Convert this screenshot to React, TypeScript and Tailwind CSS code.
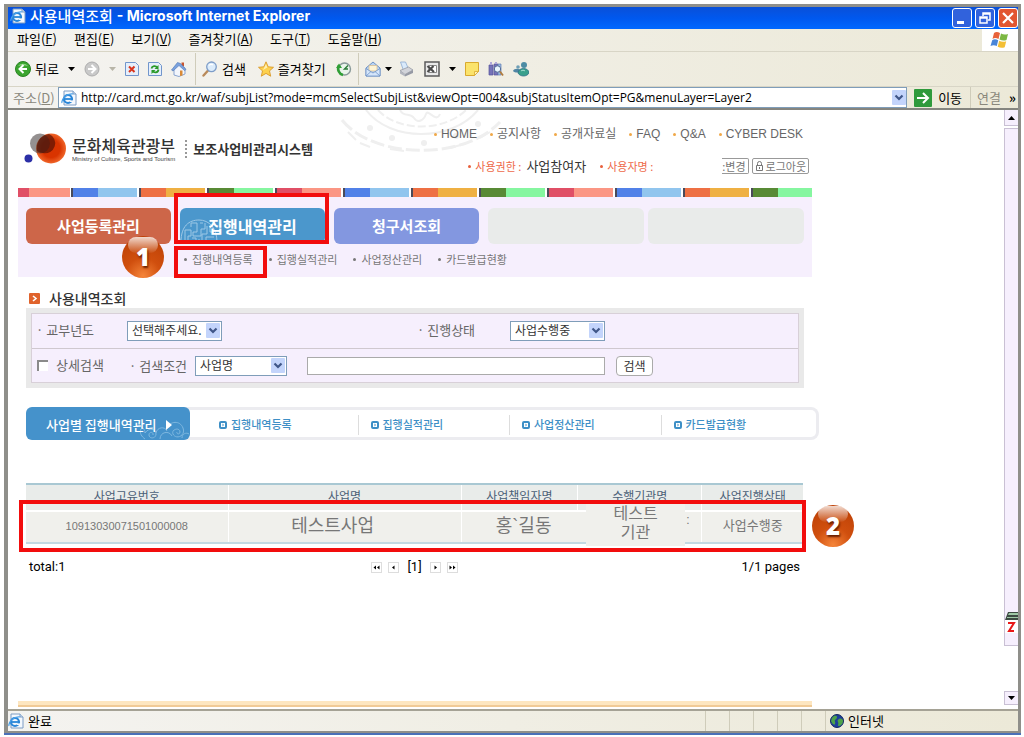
import type { ReactNode } from 'react';

const menus = [
  { label: '파일', hotkey: 'F' },
  { label: '편집', hotkey: 'E' },
  { label: '보기', hotkey: 'V' },
  { label: '즐겨찾기', hotkey: 'A' },
  { label: '도구', hotkey: 'T' },
  { label: '도움말', hotkey: 'H' },
];

const topLinks = ['HOME', '공지사항', '공개자료실', 'FAQ', 'Q&A', 'CYBER DESK'];

const stripColors = [
  ['bg-[#5181e8]', 'bg-[#91c5ee]'],
  ['bg-[#ee7044]', 'bg-[#efb043]'],
  ['bg-[#588a35]', 'bg-[#86f6a0]'],
  ['bg-[#e04f66]', 'bg-[#fb9684]'],
];

const subMenus = ['집행내역등록', '집행실적관리', '사업정산관리', '카드발급현황'];

const columns = [
  { label: '사업고유번호', width: 'w-[26%]' },
  { label: '사업명', width: 'w-[30%]' },
  { label: '사업책임자명', width: 'w-[15%]' },
  { label: '수행기관명', width: 'w-[16%]' },
  { label: '사업진행상태', width: 'w-[13%]' },
];

function IeIcon() {
  return (
    <svg viewBox="0 0 16 16" className="h-4 w-4 shrink-0" aria-hidden="true">
      <path d="M3 1h9l3 3v11H3z" fill="#f4f8fd" stroke="#7d9cc4" />
      <path d="M12 1v3h3" fill="#cfdff2" stroke="#7d9cc4" />
      <circle cx="7" cy="9" r="4" fill="none" stroke="#2a86d8" strokeWidth="2.2" />
      <path d="M4 9h7" stroke="#2a86d8" strokeWidth="1.8" />
      <path d="M9 10.4h4v1.6H9z" fill="#f4f8fd" />
      <path d="M1 13C0 9 6 3 12 4" fill="none" stroke="#4aa0e8" strokeWidth="1.2" />
    </svg>
  );
}

function Caret({ className = 'text-black' }: { className?: string }) {
  return (
    <svg viewBox="0 0 7 4" className={`h-1 w-[7px] shrink-0 ${className}`} aria-hidden="true">
      <path d="M0 0h7L3.500 4z" fill="currentColor" />
    </svg>
  );
}

function BackIcon() {
  return (
    <svg viewBox="0 0 16 16" className="h-4 w-4" aria-hidden="true">
      <circle cx="8" cy="8" r="7.500" fill="#3ba52f" stroke="#2b8424" />
      <path d="M3 5a6 5 0 0 1 10 0c-3-1-7-1-10 0z" fill="#8cd57e" />
      <path d="M8.500 4 4.500 8l4 4M5 8h7" fill="none" stroke="#fff" strokeWidth="2" />
    </svg>
  );
}

function ForwardIcon() {
  return (
    <svg viewBox="0 0 16 16" className="h-4 w-4" aria-hidden="true">
      <circle cx="8" cy="8" r="7" fill="#c9c9c9" stroke="#adadad" />
      <path d="M7.500 4l4 4-4 4M11 8H4" fill="none" stroke="#fff" strokeWidth="2" />
    </svg>
  );
}

function StopIcon() {
  return (
    <svg viewBox="0 0 14 16" className="h-4 w-[14px]" aria-hidden="true">
      <path d="M.5 1.500h10l3 3v10H.5z" fill="#e6effb" stroke="#7296cc" />
      <path d="M4 5.500 9.500 11M9.500 5.500 4 11" stroke="#d9361e" strokeWidth="2" />
    </svg>
  );
}

function RefreshIcon() {
  return (
    <svg viewBox="0 0 14 16" className="h-4 w-[14px]" aria-hidden="true">
      <path d="M.5 1.500h10l3 3v10H.5z" fill="#e6effb" stroke="#7296cc" />
      <path d="M3.500 7.500C4 4.500 8 4.500 9 6.500M10.500 8.500c-.5 3.500-4.500 3.500-6 1.500" fill="none" stroke="#2a9a2a" strokeWidth="1.800" />
      <path d="M10.500 4v4h-4zM3.500 13V9h4z" fill="#2a9a2a" />
    </svg>
  );
}

function HomeIcon() {
  return (
    <svg viewBox="0 0 16 16" className="h-4 w-4" aria-hidden="true">
      <path d="M10.500 1.500h2.500v4h-2.500z" fill="#c8542e" />
      <path d="M3 8v6l5 1.500 6-2.500V7L8 3z" fill="#f3f6fc" stroke="#8aa4cf" />
      <path d="M9 9.500h2.500v5L9 15z" fill="#d98a35" />
      <path d="M.5 9 6.500 1.500l3 1L15 8.500l-1.500 1L8 4.500 2 10z" fill="#7ba2dd" stroke="#4e74b3" strokeWidth=".6" />
    </svg>
  );
}

function SearchIcon() {
  return (
    <svg viewBox="0 0 16 16" className="h-4 w-4" aria-hidden="true">
      <path d="M6.500 9 1.500 14.500" stroke="#b98a5a" strokeWidth="2.400" strokeLinecap="round" />
      <circle cx="9.500" cy="5.800" r="4.800" fill="#dcecfb" stroke="#7e9dc8" strokeWidth="1.300" />
      <path d="M7 4.500c1-1.500 3-1.500 4-.5" fill="none" stroke="#fff" strokeWidth="1.200" />
    </svg>
  );
}

function StarIcon() {
  return (
    <svg viewBox="0 0 16 16" className="h-4 w-4" aria-hidden="true">
      <path d="M8 .8l2.200 5 5.300.5-4 3.600 1.200 5.300L8 12.400l-4.700 2.800 1.200-5.300-4-3.600 5.300-.5z" fill="#fdd14e" stroke="#d99a2b" strokeWidth=".9" />
      <path d="M8 3l1.300 3.500L5 9z" fill="#fff0b4" />
    </svg>
  );
}

function HistoryIcon() {
  return (
    <svg viewBox="0 0 16 16" className="h-4 w-4" aria-hidden="true">
      <circle cx="8.500" cy="8" r="6" fill="#e9f4ea" stroke="#8a9a9a" strokeWidth="1.400" />
      <path d="M3 4.500A6.500 6.500 0 0 0 7 14" fill="none" stroke="#2f9e35" strokeWidth="2.600" />
      <path d="M0 7h6L3 2.500z" fill="#2f9e35" />
      <path d="M12 4.500 8.500 8H12" fill="none" stroke="#287a36" strokeWidth="1.400" />
    </svg>
  );
}

function MailIcon() {
  return (
    <svg viewBox="0 0 16 16" className="h-4 w-4" aria-hidden="true">
      <path d="M1 7l7-6 7 6v8H1z" fill="#b9d3f2" stroke="#6f93c6" />
      <path d="M4 4.500h8V10H4z" fill="#fdf3d4" stroke="#d7b988" strokeWidth=".7" />
      <path d="M1 7.500 8 12l7-4.500V15H1z" fill="#d5e6fa" stroke="#6f93c6" strokeWidth=".8" />
      <path d="M1 15l5-4.500M15 15l-5-4.500" stroke="#6f93c6" strokeWidth=".8" />
    </svg>
  );
}

function PrintIcon() {
  return (
    <svg viewBox="0 0 16 16" className="h-4 w-4" aria-hidden="true">
      <path d="M2.500 1h5l3 7-5 1.500z" fill="#d9eafb" stroke="#8eabd0" strokeWidth=".8" />
      <path d="M2 9.500 10.500 6l4.500 3-8 4.500z" fill="#d2d4da" stroke="#8e929c" strokeWidth=".7" />
      <path d="M2 9.500v3l5 3v-2z" fill="#b3b6bf" />
      <path d="M7 13.500v2L15 12V9z" fill="#9599a4" />
    </svg>
  );
}

function ExcelIcon() {
  return (
    <svg viewBox="0 0 16 16" className="h-4 w-4" aria-hidden="true">
      <path d="M1 1h14v14H1z" fill="#e9e9e9" stroke="#5b5b5b" strokeWidth="1.500" />
      <path d="M5 4.500h7.500v7H5z" fill="#fff" stroke="#888" />
      <path d="M3.500 5l6.500 6M9.500 5l-6 6" stroke="#4b4b4b" strokeWidth="2.200" />
    </svg>
  );
}

function NoteIcon() {
  return (
    <svg viewBox="0 0 14 14" className="h-[14px] w-[14px]" aria-hidden="true">
      <path d="M.5.5h13v9l-4 4h-9z" fill="#fbe36b" stroke="#d9a92e" />
      <path d="M13.500 9.500h-4v4z" fill="#fff3b5" stroke="#d9a92e" strokeWidth=".8" />
    </svg>
  );
}

function ResearchIcon() {
  return (
    <svg viewBox="0 0 16 16" className="h-4 w-4" aria-hidden="true">
      <path d="M1 4h4v10H1zM6 3h4v11H6z" fill="#7673b8" stroke="#56539b" strokeWidth=".7" />
      <path d="M2 1h2v3H2zM7 1h2v2H7z" fill="#b0a9d9" />
      <path d="M10 3h3v11h-3z" fill="#9bbbe4" stroke="#5f7fb5" strokeWidth=".7" />
      <circle cx="9.500" cy="8" r="3.200" fill="#e9f5fd" stroke="#536c98" />
      <path d="M12 10.500l3 4" stroke="#b07b3e" strokeWidth="1.800" />
    </svg>
  );
}

function MessengerIcon() {
  return (
    <svg viewBox="0 0 16 16" className="h-4 w-4" aria-hidden="true">
      <circle cx="5" cy="6" r="1.800" fill="#6f9fb5" />
      <path d="M0 10c1-3 7-3 8 0-2 2-6 2-8 0z" fill="#5186a5" />
      <circle cx="11" cy="4" r="3" fill="#4d8ca4" />
      <path d="M5 12c0-6 11-6 11 0-2 4-9 4-11 0z" fill="#39a08c" stroke="#2c6f88" strokeWidth=".8" />
      <path d="M8 10c1-1 3-1 4 0" fill="none" stroke="#a8e0d2" />
    </svg>
  );
}

function WindowsFlag() {
  return (
    <svg viewBox="0 0 20 18" className="h-[18px] w-5" aria-hidden="true">
      <path d="M4 2c2-1.500 4-1 6 0L8.500 8c-2-1-4-1.500-6 0z" fill="#e8623a" />
      <path d="M11 2.500c2 1 4 1.500 7 .5L16.500 9c-2.500 1-5 .5-7-.5z" fill="#7cb843" />
      <path d="M2.200 9.200c2-1.500 4-1 6 0L6.800 15c-2-1-4-1.300-6.300 0z" fill="#4a86d8" />
      <path d="M9.200 9.700c2 1 4 1.500 7 .5l-1.500 6c-2.500 1-5 .5-7-.5z" fill="#f4bf35" />
    </svg>
  );
}

function GlobeIcon() {
  return (
    <svg viewBox="0 0 14 14" className="h-[14px] w-[14px]" aria-hidden="true">
      <circle cx="7" cy="7" r="6.500" fill="#1d3f9b" stroke="#13285e" />
      <path d="M2 4c2-3 5-2.500 5-1s-1 2-2 3 1 2 0 4-3-1-4-3zM9 5c2-1 4 0 4 2s-2 5-4 5 0-2-1-4 0-2 1-3z" fill="#4ea34a" />
    </svg>
  );
}

function Chevron() {
  return (
    <svg viewBox="0 0 14 15" className="h-[15px] w-[14px]" aria-hidden="true">
      <rect width="14" height="15" rx="1" fill="#c3d4fb" />
      <path d="M3.500 5.500 7 9l3.500-3.500" fill="none" stroke="#3f5688" strokeWidth="2.200" />
    </svg>
  );
}

function MinistryLogo() {
  return (
    <svg viewBox="0 0 44 34" className="h-[34px] w-11 shrink-0" aria-hidden="true">
      <defs>
        <radialGradient id="sun">
          <stop offset="0.6" stopColor="#d93400" />
          <stop offset="1" stopColor="#f0662a" />
        </radialGradient>
      </defs>
      <circle cx="27" cy="16.500" r="15" fill="url(#sun)" />
      <circle cx="16" cy="11.500" r="10" fill="#3d3535" fillOpacity=".55" />
      <path d="M13 13a15 15 0 0 1 12-11 10 10 0 0 1-6 19 12 12 0 0 1-6-2z" fill="#4d0f05" fillOpacity=".65" />
      <circle cx="4.500" cy="26.500" r="4" fill="#2b2fa6" />
    </svg>
  );
}

// Faint roof-tile ornament hanging behind the top links
function HeaderOrnament() {
  return (
    <svg viewBox="0 0 170 42" className="absolute left-[322px] top-0 h-[42px] w-[170px]" fill="none" stroke="#efefef" strokeWidth="2" aria-hidden="true">
      <path d="M2 10c30 38 120 42 158 2" strokeDasharray="14 4" strokeWidth="3" />
      <path d="M26 0c24 32 86 32 112 0" />
      <path d="M38 0c20 22 66 22 88 0" strokeDasharray="8 3" />
      <path d="M60 0c4 8 10 2 14 8s10 2 12-4 10 10 14 0" />
      <path d="M8 22l8 8M20 33l10 4M50 39l14 2M110 38l14-4M140 28l10-6" />
      <g fill="#efefef" stroke="none">
        <circle cx="30" cy="18" r="3" />
        <circle cx="52" cy="28" r="3" />
        <circle cx="84" cy="33" r="3" />
        <circle cx="116" cy="26" r="3" />
        <circle cx="138" cy="14" r="3" />
      </g>
    </svg>
  );
}

function TabPattern() {
  return (
    <svg viewBox="0 0 38 26" className="absolute bottom-0 left-0 h-[26px] w-[38px]" fill="none" stroke="#9dc8e6" aria-hidden="true">
      <path d="M1 24C1 8 9 2 19 2s18 8 18 22M5 24V12h6v6H8v6M11 9V5h6v9h-4v4h8v-7h4V5M20 5h3M27 8v8h-5v8M30 8v6h4M16 24v-4h-4M26 24v-5h8M29 24v-2M19 24v-3" />
    </svg>
  );
}

function CloudPattern() {
  return (
    <svg viewBox="0 0 54 22" className="absolute bottom-0 right-0 h-[22px] w-[54px]" fill="none" stroke="#7fb8e0" aria-hidden="true">
      <path d="M1 8c5 0 8 3 8 7m0 0c4-6 11-4 11 1s-7 5-7 1 5-3 4 0M20 15c1-6 9-7 11-2M24 21c0-7 9-9 12-3M31 10c3-7 13-8 16 0 3 8-7 12-10 6-2-5 7-7 7-2 0 3-4 2-3 0M46 20c0-4 4-6 7-4M5 11c-2 4 1 8 4 10" />
    </svg>
  );
}

function ToolButton({ label, children }: { label: string; children: ReactNode }) {
  return (
    <button type="button" aria-label={label} className="flex items-center gap-1">
      {children}
    </button>
  );
}

function Divider() {
  return <span className="h-8 w-px bg-[#cfccba]" />;
}

function Marker({ value, className }: { value: string; className: string }) {
  return (
    <span
      className={`absolute z-20 flex h-[42px] w-[42px] items-center justify-center rounded-full bg-[radial-gradient(circle_at_50%_95%,#f5853a_0%,#d04f0e_40%,#b83d04_100%)] font-['Open_Sans',sans-serif] text-2xl font-extrabold text-white ${className}`}
    >
      <span className="absolute inset-x-1.5 top-px h-4 rounded-full bg-linear-to-b from-white/80 to-white/5" />
      <span className="relative [text-shadow:1px_2px_2px_#6b2000]">{value}</span>
    </span>
  );
}

function SelectBox({ id, value, className }: { id: string; value: string; className: string }) {
  return (
    <span className={`relative inline-flex h-5 shrink-0 ${className}`}>
      <select
        id={id}
        className="h-full w-full appearance-none border border-[#7f9db9] bg-white pb-1 pl-1 pr-4 text-xs leading-4 text-[#333]"
      >
        <option>{value}</option>
      </select>
      <span className="pointer-events-none absolute right-0.5 top-0.5">
        <Chevron />
      </span>
    </span>
  );
}

function TitleBar() {
  return (
    <header className="flex h-[22px] items-center justify-between bg-linear-to-b from-[#0a50d8] via-[#0058ee] to-[#0068ff] pl-0.5 text-white">
      <h1 className="flex items-center gap-1 pb-1 text-[15px] leading-4 font-medium">
        <IeIcon />
        <span>사용내역조회</span>
        <span className="font-[Inter,sans-serif] text-sm font-bold">- Microsoft Internet Explorer</span>
      </h1>
      <div className="flex gap-[3px]">
        <button type="button" aria-label="최소화" className="h-5 w-5 rounded-[3px] border border-white bg-[#3162dc]">
          <svg viewBox="0 0 18 18" aria-hidden="true">
            <path d="M4 12h7v3H4z" fill="#fff" />
          </svg>
        </button>
        <button type="button" aria-label="이전 크기로" className="h-5 w-5 rounded-[3px] border border-white bg-[#3162dc]">
          <svg viewBox="0 0 18 18" fill="none" stroke="#fff" strokeWidth="1.500" aria-hidden="true">
            <path d="M4 8h7v6H4zM4 9h7M7 7V4h7v7h-2M7 5h7" />
          </svg>
        </button>
        <button type="button" aria-label="닫기" className="h-5 w-5 rounded-[3px] border border-white bg-[#e25631]">
          <svg viewBox="0 0 18 18" fill="none" stroke="#fff" strokeWidth="2.200" aria-hidden="true">
            <path d="M4 4l10 10M14 4 4 14" />
          </svg>
        </button>
      </div>
    </header>
  );
}

function MenuBar() {
  return (
    <nav className="flex h-[23px] items-stretch justify-between border-b border-[#d8d5c6]" aria-label="메뉴">
      <div className="flex items-center gap-[17px] pb-0.5 pl-[9px] text-[13px]">
        {menus.map((menu) => (
          <button key={menu.label} type="button">
            {menu.label}(<u>{menu.hotkey}</u>)
          </button>
        ))}
      </div>
      <div className="flex w-9 items-center justify-center bg-white">
        <WindowsFlag />
      </div>
    </nav>
  );
}

function Toolbar() {
  return (
    <div className="flex h-[35px] items-center border-b border-[#d8d5c6] pl-[7px] text-[13px]">
      <div className="flex items-center gap-[9px]">
        <ToolButton label="뒤로">
          <BackIcon />
          <span>뒤로</span>
        </ToolButton>
        <Caret />
        <ToolButton label="앞으로">
          <ForwardIcon />
        </ToolButton>
        <Caret className="text-[#b8b5a8]" />
        <ToolButton label="중지">
          <StopIcon />
        </ToolButton>
        <ToolButton label="새로 고침">
          <RefreshIcon />
        </ToolButton>
        <ToolButton label="홈">
          <HomeIcon />
        </ToolButton>
      </div>
      <div className="flex items-center gap-[6px] pl-2">
        <Divider />
        <ToolButton label="검색">
          <SearchIcon />
          <span>검색</span>
        </ToolButton>
      </div>
      <div className="flex items-center gap-[10px] pl-3">
        <ToolButton label="즐겨찾기">
          <StarIcon />
          <span>즐겨찾기</span>
        </ToolButton>
        <ToolButton label="열어본 페이지 목록">
          <HistoryIcon />
        </ToolButton>
      </div>
      <div className="flex items-center gap-[6px] pl-[6px]">
        <Divider />
        <ToolButton label="메일">
          <MailIcon />
          <Caret />
        </ToolButton>
        <ToolButton label="인쇄">
          <PrintIcon />
        </ToolButton>
      </div>
      <div className="flex items-center gap-[9px] pl-[10px]">
        <ToolButton label="Excel로 편집">
          <ExcelIcon />
        </ToolButton>
        <Caret />
        <ToolButton label="메모">
          <NoteIcon />
        </ToolButton>
        <ToolButton label="리서치">
          <ResearchIcon />
        </ToolButton>
        <ToolButton label="Messenger">
          <MessengerIcon />
        </ToolButton>
      </div>
    </div>
  );
}

function AddressBar() {
  return (
    <div className="flex h-[23px] items-stretch border-b-2 border-[#85857f] pl-[5px] text-[13px]">
      <label htmlFor="address" className="flex w-[45px] items-center text-[#8a887c]">
        주소(<u>D</u>)
      </label>
      <div className="flex min-w-0 flex-1 items-center gap-1 border border-[#7f9db9] bg-white pl-0.5">
        <IeIcon />
        <input
          id="address"
          readOnly
          className="min-w-0 flex-1 font-['Open_Sans',sans-serif] text-xs outline-none"
          value="http://card.mct.go.kr/waf/subjList?mode=mcmSelectSubjList&viewOpt=004&subjStatusItemOpt=PG&menuLayer=Layer2"
        />
        <button type="button" aria-label="주소 목록">
          <Chevron />
        </button>
      </div>
      <div className="flex items-center pl-[7px]">
        <button type="button" className="flex items-center gap-[6px]">
          <svg viewBox="0 0 18 18" className="h-[18px] w-[18px]" aria-hidden="true">
            <rect width="18" height="18" rx="1" fill="#2f9a3c" />
            <path d="M9 4l5 5-5 5M13 9H3" fill="none" stroke="#fff" strokeWidth="2" />
          </svg>
          이동
        </button>
        <span className="ml-2 h-full w-px bg-[#cfccba]" />
        <span className="pl-[6px] text-[#8a887c]">연결</span>
        <span className="w-[17px] pl-2 font-bold">»</span>
      </div>
    </div>
  );
}

function PageHeader() {
  return (
    <div className="relative flex h-[78px] justify-between">
      <HeaderOrnament />
      <div className="flex items-center pl-[6px]">
        <MinistryLogo />
        <div className="flex flex-col pl-1">
          <span className="text-base leading-5 font-medium text-[#333]">문화체육관광부</span>
          <span className="font-['Liberation_Sans',sans-serif] text-[6px] leading-2 text-[#444]">
            Ministry of Culture, Sports and Tourism
          </span>
        </div>
        <span className="ml-[10px] h-[18px] border-l-2 border-dotted border-[#999]" />
        <span className="pl-[6px] text-[13px] font-bold text-[#333]">보조사업비관리시스템</span>
      </div>
      <div className="relative flex flex-col items-end gap-3 pt-[14px]">
        <nav className="flex h-5 items-center gap-[13px] pr-[9px] font-['Liberation_Sans','Noto_Sans_CJK_KR',sans-serif] text-xs text-[#666]">
          {topLinks.map((link) => (
            <a key={link} href="#" className="flex items-center gap-1">
              <span className="h-[3px] w-[3px] rounded-full bg-[#f0a848]" />
              {link}
            </a>
          ))}
        </nav>
        <div className="flex h-5 items-center pr-[3px] text-[11px]">
          <span className="mr-1 h-[3px] w-[3px] rounded-full bg-[#e8603c]" />
          <span className="text-[#ee6a4a]">사용권한 :</span>
          <span className="pl-[5px] text-[13px] text-[#333]">사업참여자</span>
          <span className="ml-[14px] mr-1 h-[3px] w-[3px] rounded-full bg-[#e8603c]" />
          <span className="text-[#ee6a4a]">사용자명 :</span>
          <a href="#" className="ml-[69px] flex h-4 items-center rounded-r-xs border border-l-0 border-[#999] pr-0.5 text-[#777]">
            :변경
          </a>
          <a href="#" className="ml-[3px] flex h-4 items-center gap-0.5 rounded-xs border border-[#999] px-0.5 text-[#777]">
            <svg viewBox="0 0 9 10" className="h-[10px] w-[9px]" fill="none" stroke="currentColor" aria-hidden="true">
              <path d="M1.500 4.500h6v5h-6zM2.500 4.500v-2a2 2 0 0 1 4 0v2M4.500 6v2" />
            </svg>
            로그아웃
          </a>
        </div>
      </div>
    </div>
  );
}

function ColorStrip() {
  return (
    <div className="flex h-[9px] overflow-hidden bg-white" aria-hidden="true">
      <span className="w-[11px] shrink-0 bg-[#e04f66]" />
      <span className="mr-px w-[41px] shrink-0 bg-[#fb9684]" />
      {Array.from({ length: 11 }, (_, i) => (
        <span key={i} className="flex w-[68px] shrink-0 pr-0.5">
          <span className="w-0.5 bg-[#4a4a5a]" />
          <span className={`w-[25px] ${stripColors[i % 4][0]}`} />
          <span className={`flex-1 ${stripColors[i % 4][1]}`} />
        </span>
      ))}
    </div>
  );
}

function MainTabs() {
  return (
    <div className="bg-[#f6effd]">
      <ColorStrip />
      <nav className="relative flex h-[47px] pl-2 pr-2 pt-[11px] font-bold text-white" aria-label="주 메뉴">
        <a href="#" className="mr-[9px] flex w-[145px] items-center justify-center rounded-md bg-[#cd6649] text-[15px]">
          사업등록관리
        </a>
        <a href="#" className="relative mr-[9px] flex w-[145px] items-center justify-center rounded-md bg-[#4b97cc] text-base">
          <TabPattern />
          <span className="relative">집행내역관리</span>
          <span className="absolute -left-[6px] -right-1 -top-[15px] bottom-0 border-4 border-[#f20d0d]" />
        </a>
        <a href="#" className="mr-[9px] flex w-[145px] items-center justify-center rounded-md bg-[#8397e0] text-[15px]">
          청구서조회
        </a>
        <span className="mr-1 flex-1 rounded-md bg-[#e9ebea]" />
        <span className="flex-1 rounded-md bg-[#e9ebea]" />
        <Marker value="1" className="left-[104px] top-[39px]" />
      </nav>
      <nav className="flex h-[33px] items-center gap-4 pb-[3px] pl-[166px] text-[11px] text-[#777]" aria-label="하위 메뉴">
        {subMenus.map((menu, i) => (
          <a key={menu} href="#" className="relative flex items-center gap-[5px]">
            <span className="h-[3px] w-[3px] rounded-full bg-[#777]" />
            {menu}
            {i === 0 && <span className="absolute -left-[10px] -right-[14px] -top-[5px] h-8 border-4 border-[#f20d0d]" />}
          </a>
        ))}
      </nav>
    </div>
  );
}

function SearchForm() {
  return (
    <section className="pl-2 pr-2">
      <h2 className="flex h-[31px] items-center gap-[9px] pl-[3px] pt-[11px] text-sm font-medium text-[#333]">
        <svg viewBox="0 0 11 11" className="h-[11px] w-[11px]" aria-hidden="true">
          <rect width="11" height="11" rx="1" fill="#e0632c" />
          <path d="M4 3l3 2.500L4 8" fill="none" stroke="#fff" strokeWidth="1.600" />
        </svg>
        사용내역조회
      </h2>
      <form className="border-[5px] border-[#e9e9e9] bg-[#f6effd] text-[13px] text-[#666]">
        <div className="border border-[#d8d0d8]">
          <div className="flex h-[35px] items-center border-b border-[#cfc8cf] pl-1">
            <label htmlFor="year" className="w-[91px] pb-0.5">
              · 교부년도
            </label>
            <SelectBox id="year" value="선택해주세요." className="w-[95px]" />
            <label htmlFor="status" className="ml-[195px] w-[93px] pb-0.5">
              · 진행상태
            </label>
            <SelectBox id="status" value="사업수행중" className="w-[95px]" />
          </div>
          <div className="flex h-[33px] items-center pl-[5px]">
            <input
              id="detail"
              type="checkbox"
              className="h-[11px] w-[11px] appearance-none border-l-2 border-t-2 border-[#8a8a8a] bg-white"
            />
            <label htmlFor="detail" className="w-[81px] pb-0.5 pl-2">
              상세검색
            </label>
            <label htmlFor="field" className="w-[66px]">
              · 검색조건
            </label>
            <SelectBox id="field" value="사업명" className="w-[92px]" />
            <input aria-label="검색어" className="ml-5 h-[18px] w-[298px] border border-[#aaa] bg-white px-1" />
            <button type="button" className="ml-[11px] h-5 w-[37px] rounded-sm border border-[#aaa] bg-white text-xs leading-4 text-[#333]">
              검색
            </button>
          </div>
        </div>
      </form>
    </section>
  );
}

function WorkTabs() {
  return (
    <nav className="ml-2 -mr-[7px] mt-[19px] flex h-[33px] rounded-lg border-[3px] border-l-0 border-[#ececf0] bg-white text-[11px] font-medium text-[#3d8fc6]" aria-label="사업별 메뉴">
      <a href="#" className="relative -my-[3px] flex w-[164px] items-center gap-[9px] rounded-md bg-[#4592cb] pl-5 pt-0.5 text-[13px] text-white">
        <CloudPattern />
        <span className="relative font-medium">사업별 집행내역관리</span>
        <svg viewBox="0 0 6 10" className="relative h-[10px] w-[6px]" aria-hidden="true">
          <path d="M0 0l6 5-6 5z" fill="#fff" />
        </svg>
      </a>
      <div className="flex flex-1 items-center pl-4 pr-1 pt-0.5">
        {subMenus.map((menu) => (
          <a key={menu} href="#" className="flex h-5 flex-1 items-center gap-1 border-l border-[#ddd] pl-3 first:border-transparent">
            <svg viewBox="0 0 8 8" className="h-2 w-2" aria-hidden="true">
              <rect x="1" y="1" width="6" height="6" rx="1" fill="#fff" stroke="#3d8fc6" strokeWidth="2" />
              <path d="M3.500 2.500 5 4 3.500 5.500z" fill="#3d8fc6" />
            </svg>
            {menu}
          </a>
        ))}
      </div>
    </nav>
  );
}

function ResultTable() {
  return (
    <div className="relative ml-2 mr-[9px] mt-[43px]">
      <table className="w-full table-fixed border-collapse text-center font-['Liberation_Sans','Noto_Sans_CJK_KR',sans-serif]">
        <thead>
          <tr className="h-[27px] border-b-2 border-t-2 border-b-white border-t-[#a9c8d3] bg-[#e9ecea] text-xs leading-4 text-[#4b6077]">
            {columns.map((column) => (
              <th key={column.label} className={`border-r border-r-white p-0 pb-0.5 font-normal last:border-r-0 ${column.width}`}>
                {column.label}
              </th>
            ))}
          </tr>
        </thead>
        <tbody>
          <tr className="h-8 border-b-2 border-b-[#c3d9e2] bg-[#f0f0ec] text-[#777]">
            <td className="border-r border-r-white p-0 pb-0.5 text-[11px]">10913030071501000008</td>
            <td className="border-r border-r-white p-0 pb-0.5 pr-6 text-lg leading-5">테스트사업</td>
            <td className="p-0 pb-0.5 pl-2 text-lg leading-5">홍`길동</td>
            <td className="relative border-r border-r-white p-0">
              <span className="absolute -top-2 left-2 right-4 bg-[#f0f0ec] pb-1 text-base leading-[19px]">
                테스트
                <br />
                기관
              </span>
              <span className="absolute right-3 top-0 text-xs leading-4">:</span>
            </td>
            <td className="p-0 pb-0.5 text-[13px]">사업수행중</td>
          </tr>
        </tbody>
      </table>
      <span className="absolute -left-[7px] -right-[3px] top-[17px] h-[52px] border-4 border-[#f20d0d]" />
      <Marker value="2" className="-right-[51px] top-[22px]" />
    </div>
  );
}

function PagerButton({ label, d }: { label: string; d: string }) {
  return (
    <button type="button" aria-label={label} className="h-[11px] w-[11px] border border-[#ddd]">
      <svg viewBox="0 0 9 9" aria-hidden="true">
        <path d={d} fill="#000" />
      </svg>
    </button>
  );
}

function Pager() {
  return (
    <div className="ml-[11px] mr-3 mt-[13px] grid h-5 grid-cols-[1fr_auto_1fr] items-center font-[Roboto,sans-serif] text-[13px]">
      <span>total:1</span>
      <div className="flex items-center gap-[6px]">
        <PagerButton label="처음" d="M4 2.500v4l-2.500-2zM7.500 2.500v4L5 4.500z" />
        <PagerButton label="이전" d="M5.500 2.500v4L3 4.500z" />
        <span className="px-0.5">[1]</span>
        <PagerButton label="다음" d="M3.500 2.500v4L6 4.500z" />
        <PagerButton label="마지막" d="M1.500 2.500v4L4 4.500zM5 2.500v4l2.500-2z" />
      </div>
      <span className="text-right">1/1 pages</span>
    </div>
  );
}

function ScrollBar() {
  return (
    <div className="flex w-[14px] flex-col bg-white" aria-hidden="true">
      <div className="flex h-4 items-center justify-center border-b border-l border-[#c9c0d4] bg-[#f6effd]">
        <svg viewBox="0 0 7 4" className="h-1 w-[7px]">
          <path d="M0 4h7L3.500 0z" />
        </svg>
      </div>
      <div className="mt-0.5 flex h-[518px] flex-col justify-end overflow-hidden border border-r-0 border-[#c9c0d4] bg-[#f6effd] pb-3">
        <svg viewBox="0 0 13 22" className="h-[22px] w-[13px]">
          <path d="M3 1h10v8H0z" fill="#3d4a42" />
          <path d="M4 2h9v2H3zM2 6h11v1H2z" fill="#9fc8a6" />
          <path d="M0 9h13v13H0z" fill="#fff" />
          <path d="M3 12h6l-5 8h5" fill="none" stroke="#e81818" strokeWidth="2" />
        </svg>
      </div>
      <div className="mb-1 mt-auto flex h-[14px] items-center justify-center border border-r-0 border-[#c9c0d4] bg-[#f6effd]">
        <Caret />
      </div>
    </div>
  );
}

function StatusBar() {
  return (
    <footer className="flex h-[22px] items-center border-t-2 border-[#a5a295] text-[13px]">
      <span className="flex flex-1 items-center gap-1">
        <IeIcon />
        완료
      </span>
      <div className="flex h-full gap-[23px] border-r border-[#cfccba] pr-[23px]" aria-hidden="true">
        {[0, 1, 2, 3, 4].map((n) => (
          <span key={n} className="w-px bg-[#cfccba]" />
        ))}
      </div>
      <span className="flex w-[192px] items-center gap-1 pl-1">
        <GlobeIcon />
        인터넷
      </span>
    </footer>
  );
}

export default function App() {
  return (
    <div className="flex min-h-screen flex-col bg-white pb-0.5 pl-1 pr-[3px] pt-1 font-['Noto_Sans_CJK_KR',sans-serif] text-black">
      <div className="flex flex-1 flex-col border-b-2 border-[#4a70b8]">
        <div className="flex flex-1 flex-col border-b-2 border-l-4 border-r-[3px] border-t-[3px] border-[#8f8f8a] bg-linear-to-r from-[#f4f3f0] to-[#ece9d8]">
          <TitleBar />
          <MenuBar />
          <Toolbar />
          <AddressBar />
          <div className="flex flex-1 bg-white">
            <main className="flex min-w-0 flex-1 flex-col pl-[10px]">
              <div className="flex w-full max-w-[794px] flex-1 flex-col">
                <PageHeader />
                <MainTabs />
                <SearchForm />
                <WorkTabs />
                <ResultTable />
                <Pager />
                <div className="mb-0.5 mt-auto h-[6px] border-b-2 border-[#f0ca96] bg-[#fde6c0]" />
              </div>
            </main>
            <ScrollBar />
          </div>
          <StatusBar />
        </div>
      </div>
    </div>
  );
}
